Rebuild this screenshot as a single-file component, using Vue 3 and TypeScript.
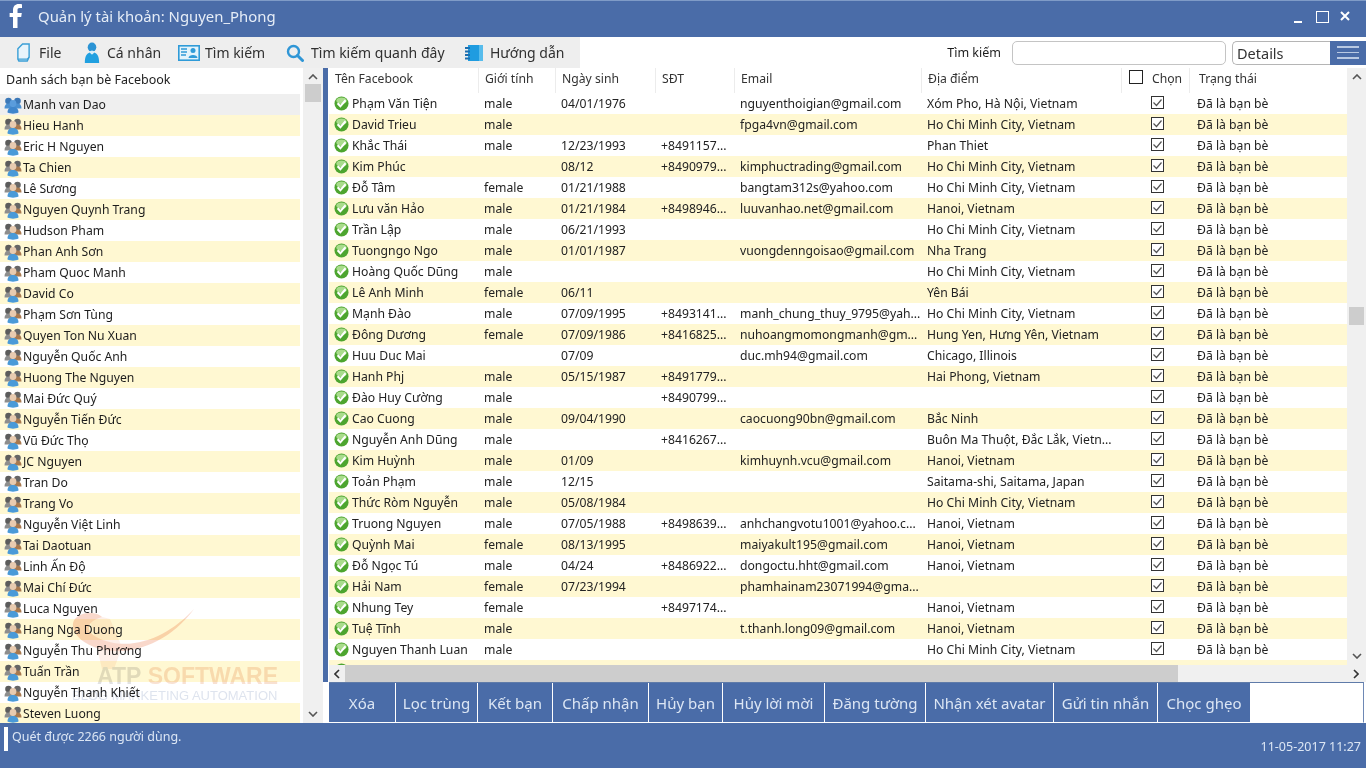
<script setup lang="ts">
interface Row { name: string; gender: string; date: string; phone: string; email: string; place: string }

const friends: string[] = [
  'Manh van Dao','Hieu Hanh','Eric H Nguyen','Ta Chien','Lê Sương','Nguyen Quynh Trang','Hudson Pham','Phan Anh Sơn','Pham Quoc Manh','David Co','Phạm Sơn Tùng','Quyen Ton Nu Xuan','Nguyễn Quốc Anh','Huong The Nguyen','Mai Đức Quý','Nguyễn Tiến Đức','Vũ Đức Thọ','JC Nguyen','Tran Do','Trang Vo','Nguyễn Việt Linh','Tai Daotuan','Linh Ấn Độ','Mai Chí Đức','Luca Nguyen','Hang Nga Duong','Nguyễn Thu Phương','Tuấn Trần','Nguyễn Thanh Khiết','Steven Luong'
]

const HCM = 'Ho Chi Minh City, Vietnam'
const HN = 'Hanoi, Vietnam'
const rows: Row[] = [
  { name:'Phạm Văn Tiện', gender:'male', date:'04/01/1976', phone:'', email:'nguyenthoigian@gmail.com', place:'Xóm Pho, Hà Nội, Vietnam' },
  { name:'David Trieu', gender:'male', date:'', phone:'', email:'fpga4vn@gmail.com', place:HCM },
  { name:'Khắc Thái', gender:'male', date:'12/23/1993', phone:'+8491157...', email:'', place:'Phan Thiet' },
  { name:'Kim Phúc', gender:'', date:'08/12', phone:'+8490979...', email:'kimphuctrading@gmail.com', place:HCM },
  { name:'Đỗ Tâm', gender:'female', date:'01/21/1988', phone:'', email:'bangtam312s@yahoo.com', place:HCM },
  { name:'Lưu văn Hảo', gender:'male', date:'01/21/1984', phone:'+8498946...', email:'luuvanhao.net@gmail.com', place:HN },
  { name:'Trần Lập', gender:'male', date:'06/21/1993', phone:'', email:'', place:HCM },
  { name:'Tuongngo Ngo', gender:'male', date:'01/01/1987', phone:'', email:'vuongdenngoisao@gmail.com', place:'Nha Trang' },
  { name:'Hoàng Quốc Dũng', gender:'male', date:'', phone:'', email:'', place:HCM },
  { name:'Lê Anh Minh', gender:'female', date:'06/11', phone:'', email:'', place:'Yên Bái' },
  { name:'Mạnh Đào', gender:'male', date:'07/09/1995', phone:'+8493141...', email:'manh_chung_thuy_9795@yah...', place:HCM },
  { name:'Đông Dương', gender:'female', date:'07/09/1986', phone:'+8416825...', email:'nuhoangmomongmanh@gm...', place:'Hung Yen, Hưng Yên, Vietnam' },
  { name:'Huu Duc Mai', gender:'', date:'07/09', phone:'', email:'duc.mh94@gmail.com', place:'Chicago, Illinois' },
  { name:'Hanh Phj', gender:'male', date:'05/15/1987', phone:'+8491779...', email:'', place:'Hai Phong, Vietnam' },
  { name:'Đào Huy Cường', gender:'male', date:'', phone:'+8490799...', email:'', place:'' },
  { name:'Cao Cuong', gender:'male', date:'09/04/1990', phone:'', email:'caocuong90bn@gmail.com', place:'Bắc Ninh' },
  { name:'Nguyễn Anh Dũng', gender:'male', date:'', phone:'+8416267...', email:'', place:'Buôn Ma Thuột, Đắc Lắk, Vietn...' },
  { name:'Kim Huỳnh', gender:'male', date:'01/09', phone:'', email:'kimhuynh.vcu@gmail.com', place:HN },
  { name:'Toản Phạm', gender:'male', date:'12/15', phone:'', email:'', place:'Saitama-shi, Saitama, Japan' },
  { name:'Thức Ròm Nguyễn', gender:'male', date:'05/08/1984', phone:'', email:'', place:HCM },
  { name:'Truong Nguyen', gender:'male', date:'07/05/1988', phone:'+8498639...', email:'anhchangvotu1001@yahoo.c...', place:HN },
  { name:'Quỳnh Mai', gender:'female', date:'08/13/1995', phone:'', email:'maiyakult195@gmail.com', place:HN },
  { name:'Đỗ Ngọc Tú', gender:'male', date:'04/24', phone:'+8486922...', email:'dongoctu.hht@gmail.com', place:HN },
  { name:'Hải Nam', gender:'female', date:'07/23/1994', phone:'', email:'phamhainam23071994@gma...', place:'' },
  { name:'Nhung Tey', gender:'female', date:'', phone:'+8497174...', email:'', place:HN },
  { name:'Tuệ Tĩnh', gender:'male', date:'', phone:'', email:'t.thanh.long09@gmail.com', place:HN },
  { name:'Nguyen Thanh Luan', gender:'male', date:'', phone:'', email:'', place:HCM },
]

const actions: string[] = ['Xóa','Lọc trùng','Kết bạn','Chấp nhận','Hủy bạn','Hủy lời mời','Đăng tường','Nhận xét avatar','Gửi tin nhắn','Chọc ghẹo']
</script>

<template>
  <div class="app">
    <header class="titlebar">
      <svg class="fb" viewBox="0 0 14 24" width="14" height="24"><path d="M4 24V13H.6V9H4V6C4 2.2 6.300 0 9.700 0c1.500 0 2.900.1 3.300.2v3.700h-2.300C8.900 3.900 8.500 4.800 8.500 6v3h4.300l-.6 4H8.500v11z" fill="#fff"/></svg>
      <span class="title">Quản lý tài khoản: Nguyen_Phong</span>
      <div class="winctl">
        <span class="min"></span>
        <span class="max"></span>
        <svg viewBox="0 0 10 10" width="10" height="10"><path d="M1 1l8 8M9 1l-8 8" stroke="#fff" stroke-width="2"/></svg>
      </div>
    </header>

    <nav class="toolbar">
      <div class="tools">
        <div class="tool t-file">
          <svg viewBox="0 0 16 20" width="15" height="19"><path d="M2 6l5-5h7v14l-2 4H3l-1-2z" fill="#e8f4fb" stroke="#3a9fd6" stroke-width="1.500"/><path d="M2 17h10l2-2" fill="none" stroke="#3a9fd6" stroke-width="1.200"/></svg>
          <span>File</span>
        </div>
        <div class="tool t-person">
          <svg viewBox="0 0 18 22" width="18" height="21"><ellipse cx="9" cy="5.500" rx="4.500" ry="5" fill="#2b93d4"/><path d="M1.500 22c0-8 2.500-10 5-11l2.500 2 2.500-2c2.500 1 5 3 5 11z" fill="#21a0e0"/><path d="M6 10l3 3 3-3-3-1z" fill="#d6eefa"/></svg>
          <span>Cá nhân</span>
        </div>
        <div class="tool t-card">
          <svg viewBox="0 0 22 16" width="22" height="16"><rect x=".8" y=".8" width="20.400" height="14.400" fill="#e3f3fb" stroke="#2f9bd8" stroke-width="1.600"/><path d="M3 4h6M3 7h6M3 10h5" stroke="#2f9bd8" stroke-width="1.400"/><circle cx="15" cy="5.500" r="2.500" fill="#2f9bd8"/><path d="M10.500 13c0-4 9-4 9 0z" fill="#2f9bd8"/></svg>
          <span>Tìm kiếm</span>
        </div>
        <div class="tool t-search">
          <svg viewBox="0 0 18 18" width="18" height="18"><circle cx="7.500" cy="7.500" r="5.500" fill="none" stroke="#2f96d6" stroke-width="2.400"/><path d="M11.500 11.500l5 5" stroke="#2f96d6" stroke-width="3" stroke-linecap="round"/></svg>
          <span>Tìm kiếm quanh đây</span>
        </div>
        <div class="tool t-note">
          <svg viewBox="0 0 18 18" width="18" height="18"><rect x="3" y="1" width="15" height="16" fill="#1f9ce0"/><rect x="14" y="1" width="4" height="16" fill="#57bcec"/><path d="M0 4h5M0 7.500h5M0 11h5M0 14.500h5" stroke="#1d6fb0" stroke-width="1.800"/></svg>
          <span>Hướng dẫn</span>
        </div>
      </div>
      <div class="search">
        <label class="search-label">Tìm kiếm</label>
        <div class="input"></div>
        <div class="details">Details</div>
        <div class="menu"><i></i><i></i><i></i></div>
      </div>
    </nav>

    <main class="main">
      <section class="left">
        <div class="list">
          <div class="list-head">Danh sách bạn bè Facebook</div>
          <div v-for="(f, i) in friends" :key="f" class="friend" :class="{ alt: i % 2 === 1, sel: i === 0 }">
            <svg viewBox="0 0 18 18" width="18" height="18" class="ficon">
              <circle cx="4.500" cy="5" r="3.300" :fill="i === 0 ? '#3b78b8' : '#5c5c5c'"/>
              <circle cx="13.500" cy="5" r="3.300" :fill="i === 0 ? '#3b78b8' : '#666'"/>
              <path d="M.5 12.500C.5 9 2 7.500 4.500 7.500S9 9 9 12.500z" :fill="i === 0 ? '#4a8fd0' : '#8d8d8d'"/>
              <path d="M9 12.500C9 9 11 7.500 13.500 7.500S17.500 9 17.500 12.500z" :fill="i === 0 ? '#4a8fd0' : '#a8794f'"/>
              <circle cx="9" cy="7.500" r="3.400" :fill="i === 0 ? '#5a9cdc' : '#e8cbb0'"/>
              <path d="M3.500 16.500c0-4 2.500-5.500 5.500-5.500s5.500 1.500 5.500 5.500c-3 1.500-8 1.500-11 0z" :fill="i === 0 ? '#3f86cc' : '#4a9ad8'"/>
            </svg>
            <span>{{ f }}</span>
          </div>
        </div>
        <div class="vbar">
          <svg class="arrow" viewBox="0 0 10 6" width="10" height="6"><path d="M1 5l4-4 4 4" fill="none" stroke="#555" stroke-width="1.600"/></svg>
          <div class="thumb"></div>
          <svg class="arrow bottom" viewBox="0 0 10 6" width="10" height="6"><path d="M1 1l4 4 4-4" fill="none" stroke="#555" stroke-width="1.600"/></svg>
        </div>
        <div class="strip"></div>
      </section>

      <section class="right">
        <div class="table-wrap">
          <div class="table">
            <div class="thead">
              <div class="th">Tên Facebook</div>
              <div class="th">Giới tính</div>
              <div class="th">Ngày sinh</div>
              <div class="th">SĐT</div>
              <div class="th">Email</div>
              <div class="th">Địa điểm</div>
              <div class="th th-check"><span class="box big"></span><span>Chọn</span></div>
              <div class="th th-status">Trạng thái</div>
            </div>
            <div v-for="(r, i) in rows" :key="r.name" class="tr" :class="{ alt: i % 2 === 1 }">
              <div class="td name">
                <svg viewBox="0 0 16 16" width="15" height="15" class="ok">
                  <circle cx="8" cy="8" r="7.500" fill="#4da52f"/>
                  <ellipse cx="8" cy="5" rx="5.500" ry="3.500" fill="#a9dc8c"/>
                  <path d="M3.800 7.800l3 3.200 5.500-6.500" fill="none" stroke="#fff" stroke-width="2.200"/>
                </svg>
                <span>{{ r.name }}</span>
              </div>
              <div class="td">{{ r.gender }}</div>
              <div class="td">{{ r.date }}</div>
              <div class="td">{{ r.phone }}</div>
              <div class="td">{{ r.email }}</div>
              <div class="td">{{ r.place }}</div>
              <div class="td center">
                <svg viewBox="0 0 13 13" width="13" height="13" class="cb"><rect x=".5" y=".5" width="12" height="12" fill="#fff" stroke="#333"/><path d="M2.500 6.500l3 3 5-6" fill="none" stroke="#555" stroke-width="1.200"/></svg>
              </div>
              <div class="td td-status">Đã là bạn bè</div>
            </div>
            <div class="tr alt">
              <div class="td name"><svg viewBox="0 0 16 16" width="15" height="15" class="ok"><circle cx="8" cy="8" r="7.500" fill="#4da52f"/></svg></div>
            </div>
          </div>
          <div class="vbar wide">
            <svg class="arrow" viewBox="0 0 10 6" width="10" height="6"><path d="M1 5l4-4 4 4" fill="none" stroke="#555" stroke-width="1.600"/></svg>
            <div class="thumb mid"></div>
            <svg class="arrow bottom" viewBox="0 0 10 6" width="10" height="6"><path d="M1 1l4 4 4-4" fill="none" stroke="#555" stroke-width="1.600"/></svg>
          </div>
        </div>
        <div class="hbar">
          <svg viewBox="0 0 6 10" width="6" height="10"><path d="M5 1L1 5l4 4" fill="none" stroke="#333" stroke-width="1.600"/></svg>
          <div class="hthumb"></div>
          <svg viewBox="0 0 6 10" width="6" height="10" class="hright"><path d="M1 1l4 4-4 4" fill="none" stroke="#333" stroke-width="1.600"/></svg>
        </div>
        <div class="actions">
          <button v-for="a in actions" :key="a" class="action" type="button">{{ a }}</button>
        </div>
      </section>
    </main>

    <footer class="status">
      <div class="msg"><span class="mark"></span><span class="msg-text">Quét được 2266 người dùng.</span></div>
      <div class="clock">11-05-2017 11:27</div>
    </footer>

    <div class="watermark" aria-hidden="true">
      <svg viewBox="0 0 140 70" width="140" height="70" class="swoosh">
        <path d="M28 8C6 10 8 32 34 42c30 11 72 0 100-38C112 28 78 46 46 36 26 30 22 18 42 12 38 8 33 8 28 8z" fill="#f0a080" opacity=".75"/>
        <path d="M28 8l22 6 12 28-8 22H42L34 30z" fill="#f5b8a0" opacity=".4"/>
      </svg>
      <div class="wm1"><b>ATP</b> SOFTWARE</div>
      <div class="wm2">BLOG MARKETING AUTOMATION</div>
    </div>
  </div>
</template>

<style>
html, body { margin: 0; background: #fff; overflow: hidden; }
</style>

<style scoped>
.app {
  position: relative;
  width: 1366px;
  height: 768px;
  display: flex;
  flex-direction: column;
  overflow: hidden;
  background: #fff;
  color: #1c1c1c;
  font-family: "Noto Sans", "Open Sans", sans-serif;
  font-size: 12.200px;
}
.titlebar {
  height: 37px;
  flex: none;
  box-sizing: border-box;
  border-top: 1px solid #7f9bc7;
  background: #4a6ca8;
  display: flex;
  align-items: center;
  padding: 0 16px 6px 9px;
  color: #e6edf7;
}
.fb { margin-right: 15px; }
.title { font-size: 14.900px; }
.winctl { margin-left: auto; display: flex; align-items: center; }
.min { width: 8px; height: 2px; background: #fff; margin: 11px 14px 0 0; }
.max { width: 11px; height: 10px; border: 1px solid #fff; margin: 1px 11px 0 0; }

.toolbar {
  height: 31px;
  flex: none;
  display: flex;
  align-items: stretch;
  background: #fff;
}
.tools {
  width: 580px;
  background: #eeeeee;
  display: grid;
  grid-template-columns: 67px 95px 108px 179px 1fr;
  align-items: center;
  padding-left: 16px;
  box-sizing: border-box;
  font-size: 14px;
  color: #303030;
  white-space: nowrap;
}
.tool { display: flex; align-items: center; }
.t-file { gap: 8px; }
.t-person { gap: 6px; }
.t-card { gap: 5px; }
.t-search { gap: 7px; }
.t-note { gap: 7px; }
.search { flex: 1; display: flex; align-items: center; justify-content: flex-end; }
.search-label { font-size: 12.500px; margin-right: 11px; }
.input {
  width: 214px; height: 24px;
  border: 1px solid #c4c4c4; border-radius: 5px;
  box-sizing: border-box; margin-right: 6px;
}
.details {
  width: 98px; height: 24px;
  border: 1px solid #b5b5b5; border-right: 0; border-radius: 5px 0 0 5px;
  box-sizing: border-box;
  font-size: 14.500px; line-height: 23px; padding-left: 4px;
  color: #333;
}
.menu {
  width: 36px; height: 24px;
  background: #4a6ca8;
  display: flex; flex-direction: column; justify-content: center; align-items: center; gap: 4px;
}
.menu i { display: block; width: 22px; height: 1.500px; background: #b9c9e2; }

.main { flex: 1; min-height: 0; display: flex; }
.left { width: 329px; flex: none; display: flex; }
.list { width: 300px; flex: none; overflow: hidden; }
.list-head { height: 26px; line-height: 23px; padding-left: 6px; color: #222; font-size: 12.500px; }
.friend {
  height: 21px;
  display: flex;
  align-items: center;
  gap: 1px;
  padding-left: 4px;
}
.friend.alt { background: #fff8d2; }
.friend.sel { background: #efefef; }
.ficon { flex: none; }
.vbar {
  width: 20px;
  margin-left: 3px;
  background: #f0f0f0;
  display: flex;
  flex-direction: column;
  align-items: center;
}
.arrow { margin-top: 6px; flex: none; }
.arrow.bottom { margin-top: auto; margin-bottom: 6px; }
.thumb { width: 16px; height: 18px; background: #cdcdcd; margin-top: 4px; flex: none; }
.strip { width: 5px; background: #4a6ca8; height: 614px; margin-right: 1px; }

.right { flex: 1; min-width: 0; display: flex; flex-direction: column; }
.table-wrap { height: 597px; flex: none; display: flex; overflow: hidden; }
.table { width: 1018px; flex: none; overflow: hidden; }
.thead, .tr {
  display: grid;
  grid-template-columns: 150px 77px 100px 79px 187px 200px 68px 157px;
}
.thead { height: 25px; }
.th {
  line-height: 21px;
  padding-left: 6px;
  box-sizing: border-box;
  border-right: 1px solid #ececec;
  color: #333;
}
.th:last-child { border-right: 0; }
.th-status { padding-left: 9px; }
.th-check { display: flex; align-items: flex-start; gap: 9px; padding-left: 7px; }
.box.big {
  width: 12px; height: 12px; border: 1px solid #222; display: block; margin-top: 2px;
}
.tr { height: 21px; }
.tr.alt { background: #fff8d2; }
.td {
  line-height: 21px;
  padding-left: 5px;
  white-space: nowrap;
  overflow: hidden;
  color: #222;
}
.td-status { padding-left: 7px; }
.td.name { display: flex; align-items: center; gap: 3px; }
.ok { flex: none; }
.td.center { display: flex; align-items: center; padding-left: 29px; }
.cb { margin-bottom: 2px; }
.vbar.wide { width: 19px; margin-left: 0; flex: none; height: 597px; }
.thumb.mid { margin-top: 227px; height: 18px; width: 15px; }

.hbar {
  height: 17px;
  flex: none;
  background: #f0f0f0;
  display: flex;
  align-items: center;
  padding-left: 5px;
}
.hthumb { width: 833px; height: 17px; background: #cdcdcd; margin-left: 5px; }
.hright { margin-left: auto; margin-right: 7px; }

.actions {
  height: 41px;
  flex: none;
  width: 1035px;
  box-sizing: border-box;
  border-top: 1px solid #5f7ba9;
  border-right: 1px solid #6e88b5;
  border-bottom: 1px solid #fff;
  display: grid;
  grid-template-columns: 67px 82px 75px 96px 74px 102px 101px 128px 104px 93px;
  background: #fff;
}
.action {
  appearance: none;
  border: 0;
  border-right: 1px solid #fff;
  background: #4a6ca8;
  color: #dce6f4;
  font-family: inherit;
  font-size: 15px;
  padding: 0;
  height: 100%;
  white-space: nowrap;
}
.status {
  height: 45px;
  flex: none;
  background: #4a6ca8;
  display: flex;
  justify-content: space-between;
  color: #dce6f4;
  font-size: 12.500px;
}
.msg { display: flex; align-items: flex-start; padding-left: 4px; padding-top: 4px; gap: 4px; }
.mark { width: 4px; height: 24px; background: #fff; display: block; }
.msg-text { line-height: 19px; }
.clock { align-self: flex-end; padding: 0 5px 13px 0; }

.watermark {
  position: absolute;
  left: 60px;
  top: 605px;
  width: 225px;
  height: 100px;
  pointer-events: none;
  mix-blend-mode: multiply;
  opacity: .55;
}
.swoosh { position: absolute; left: 0; top: 0; }
.wm1 {
  position: absolute; left: 37px; top: 58px;
  font: 700 23px "Liberation Sans", sans-serif;
  color: #f3c9ad;
  white-space: nowrap;
}
.wm1 b { color: #c9c9c9; }
.wm2 {
  position: absolute; left: 12px; top: 83px;
  font: 400 13px "Liberation Sans", sans-serif;
  color: #c3cde0;
  white-space: nowrap;
}
</style>
